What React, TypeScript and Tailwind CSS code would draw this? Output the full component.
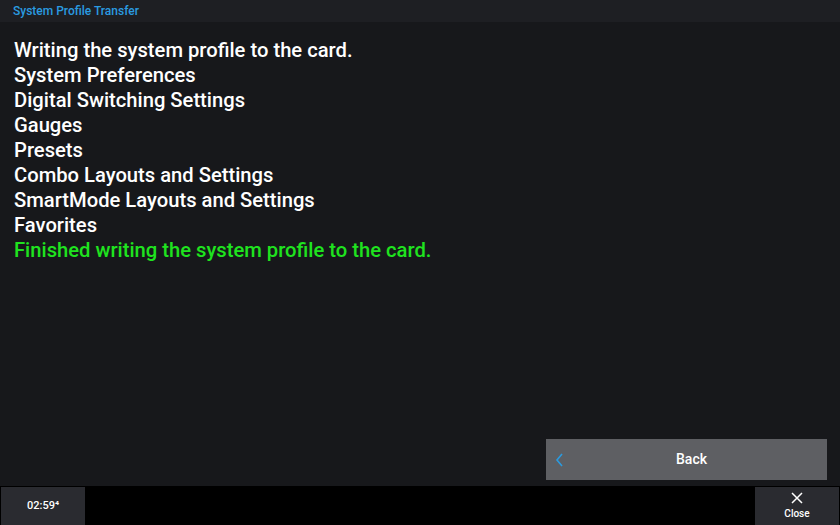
const lines = [
  "Writing the system profile to the card.",
  "System Preferences",
  "Digital Switching Settings",
  "Gauges",
  "Presets",
  "Combo Layouts and Settings",
  "SmartMode Layouts and Settings",
  "Favorites",
];

export default function App() {
  return (
    <div className="w-[840px] h-[525px] flex flex-col bg-black font-['Roboto',sans-serif] overflow-hidden">
      <div className="h-[22px] shrink-0 bg-[#1e1f23] flex items-center px-[13px]">
        <span className="text-[12px] font-medium text-[#2a9be0]">System Profile Transfer</span>
      </div>
      <div className="flex-1 bg-[#17181b] flex flex-col pl-[14px] pt-[16px] pb-[6px] pr-[13px]">
        <div className="flex flex-col text-[20.2px] leading-[25px] font-medium text-white">
          {lines.map((l) => (
            <div key={l}>{l}</div>
          ))}
          <div className="text-[#1fe31f]">Finished writing the system profile to the card.</div>
        </div>
        <div className="mt-auto flex justify-end">
          <button className="w-[281px] h-[41px] bg-[#5e5f63] flex items-center relative pl-[10px]">
            <svg className="absolute left-[9px]" width="10" height="16" viewBox="0 0 10 16">
              <path d="M7 2 L2 8 L7 14" stroke="#2a9be0" strokeWidth="1.6" fill="none" />
            </svg>
            <span className="flex-1 text-center text-[14px] font-medium text-white">Back</span>
          </button>
        </div>
      </div>
      <div className="h-[39px] shrink-0 bg-black flex justify-between px-[1px] pt-[1px]">
        <div className="w-[84px] bg-[#2a2b30] flex items-center justify-center text-[11px] font-medium text-white">
          02:59⁴
        </div>
        <div className="w-[84px] bg-[#2a2b30] flex flex-col items-center justify-center text-white">
          <svg width="12" height="12" viewBox="0 0 12 12">
            <path d="M1 1 L11 11 M11 1 L1 11" stroke="white" strokeWidth="1.5" />
          </svg>
          <span className="text-[10px] font-medium mt-[2px]">Close</span>
        </div>
      </div>
    </div>
  );
}
